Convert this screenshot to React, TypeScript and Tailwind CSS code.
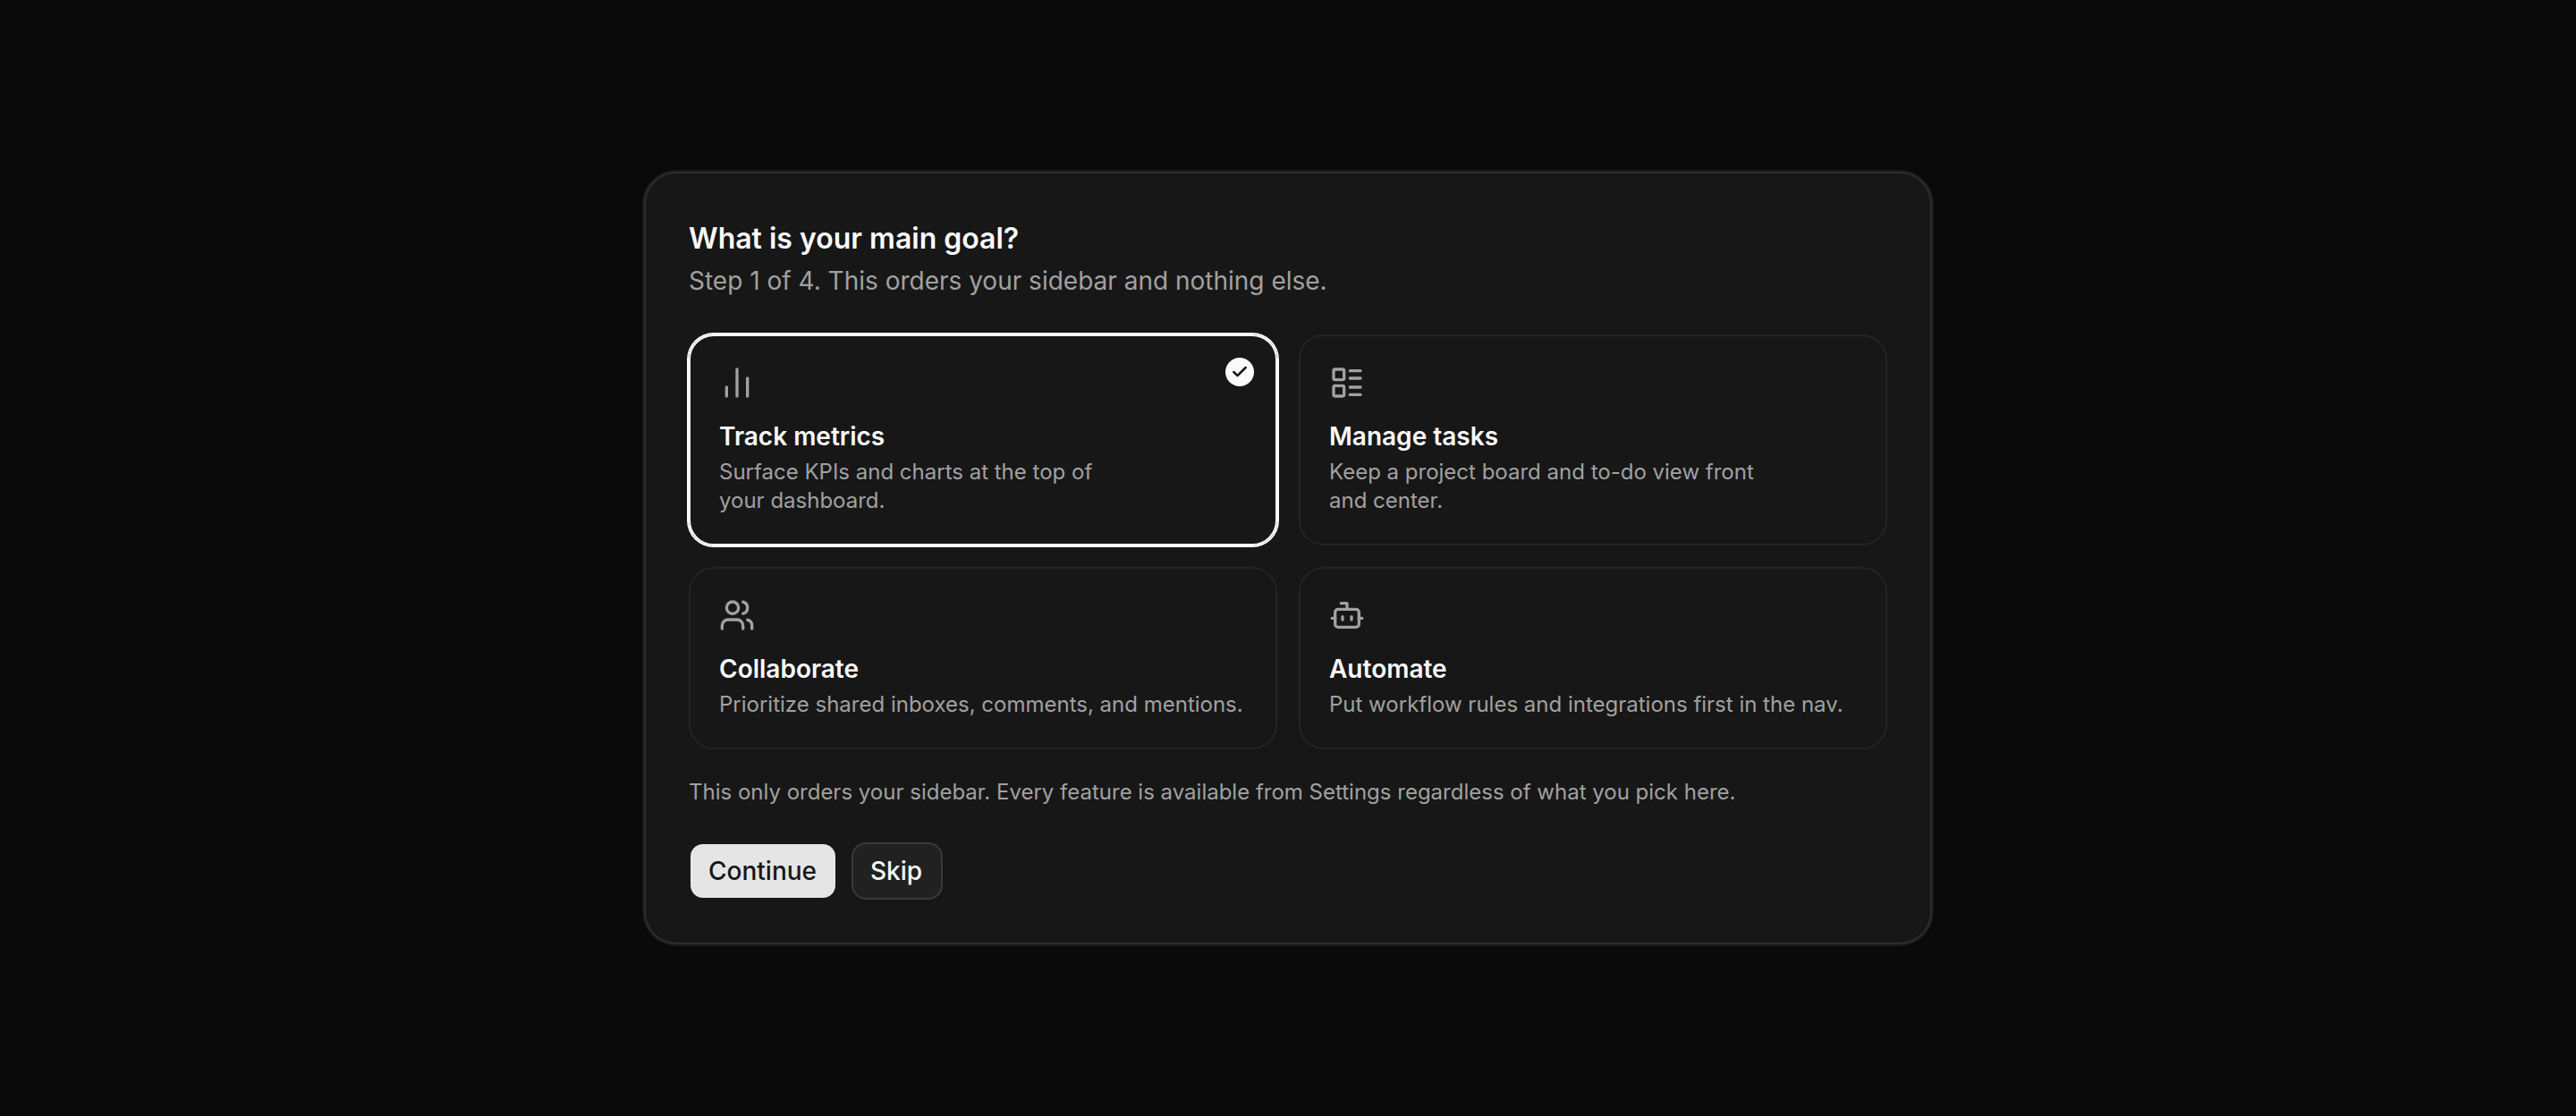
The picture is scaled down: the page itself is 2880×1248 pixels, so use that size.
import { useState } from 'react';
import { Bot, ChartNoAxesColumn, Check, LayoutList, Users } from 'lucide-react';

const goals = [
  {
    id: 'metrics',
    title: 'Track metrics',
    description: 'Surface KPIs and charts at the top of your dashboard.',
    icon: ChartNoAxesColumn,
  },
  {
    id: 'tasks',
    title: 'Manage tasks',
    description: 'Keep a project board and to-do view front and center.',
    icon: LayoutList,
  },
  {
    id: 'collaborate',
    title: 'Collaborate',
    description: 'Prioritize shared inboxes, comments, and mentions.',
    icon: Users,
  },
  {
    id: 'automate',
    title: 'Automate',
    description: 'Put workflow rules and integrations first in the nav.',
    icon: Bot,
  },
];

type GoalCardProps = {
  goal: (typeof goals)[number];
  selected: boolean;
  onSelect: () => void;
};

const GoalCard = ({ goal, selected, onSelect }: GoalCardProps) => {
  const Icon = goal.icon;

  return (
    <button
      type="button"
      role="radio"
      aria-checked={selected}
      onClick={onSelect}
      className={`relative flex flex-col items-start rounded-[28px] border-2 p-8 text-left ${
        selected ? 'border-neutral-50 ring-2 ring-neutral-50' : 'border-[#242424]'
      }`}
    >
      <Icon className="size-10 text-[#a1a1a1]" />
      <span className="mt-5 text-[28px] leading-10 font-semibold text-neutral-50">{goal.title}</span>
      <span className="mt-1 text-2xl leading-8 text-pretty text-[#a1a1a1]">{goal.description}</span>
      {selected && (
        <span className="absolute top-6 right-6 flex size-8 items-center justify-center rounded-full bg-neutral-50 text-neutral-900">
          <Check className="size-5" strokeWidth={3} />
        </span>
      )}
    </button>
  );
};

const App = () => {
  const [selectedGoal, setSelectedGoal] = useState('metrics');

  return (
    <main className="flex min-h-screen items-center justify-center bg-neutral-950 font-['Inter',sans-serif]">
      <section className="w-[1440px] rounded-[36px] border-2 border-[#2e2e2e] bg-neutral-900 p-12 ring-2 ring-[#1a1a1a]">
        <h1 className="pt-px text-[32px] leading-12 font-semibold text-neutral-50">What is your main goal?</h1>
        <p className="mt-[3px] text-[28px] leading-10 text-[#a1a1a1]">
          Step 1 of 4. This orders your sidebar and nothing else.
        </p>

        <div role="radiogroup" className="mt-10 grid grid-cols-2 gap-6">
          {goals.map((goal) => (
            <GoalCard
              key={goal.id}
              goal={goal}
              selected={goal.id === selectedGoal}
              onSelect={() => setSelectedGoal(goal.id)}
            />
          ))}
        </div>

        <p className="mt-8 text-2xl leading-8 text-[#a1a1a1]">
          This only orders your sidebar. Every feature is available from Settings regardless of what you pick here.
        </p>

        <div className="mt-10 flex gap-4">
          <button
            type="button"
            className="flex h-16 w-[166px] items-center rounded-2xl border-2 border-transparent bg-neutral-200 bg-clip-padding px-5 text-[28px] font-medium text-neutral-900"
          >
            Continue
          </button>
          <button
            type="button"
            className="flex h-16 w-[102px] items-center rounded-2xl border-2 border-[#3a3a3a] bg-[#212121] pl-[19px] text-[28px] font-medium text-neutral-50 shadow-[0_2px_4px_rgba(0,0,0,0.05)]"
          >
            Skip
          </button>
        </div>
      </section>
    </main>
  );
};

export default App;
